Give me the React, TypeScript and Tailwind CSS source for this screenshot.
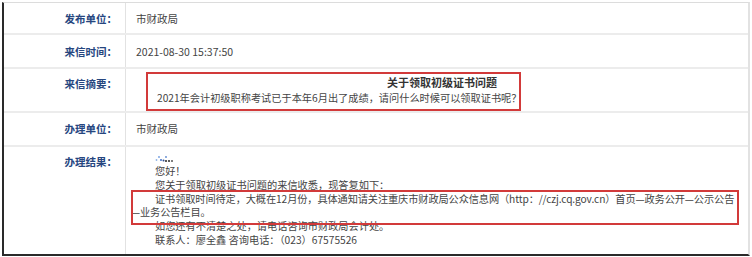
const font = { fontFamily: '"Noto Sans CJK SC", "Noto Sans", sans-serif' }

function Label({ children, pt }: { children: string; pt: string }) {
  return (
    <div
      className={`w-[122px] shrink-0 border-r border-[#e2e2e2] pr-[8px] text-right text-[10.5px] leading-[13px] font-bold text-[#26467f] ${pt}`}
    >
      {children}
    </div>
  )
}

function RedactedName() {
  return (
    <svg width="20" height="9" viewBox="0 0 20 9" className="block">
      <circle cx="1.5" cy="5" r="0.9" fill="#8fb4e6" />
      <circle cx="4" cy="2" r="0.9" fill="#6f9be0" />
      <circle cx="6" cy="5" r="1" fill="#3f6fc4" />
      <circle cx="8.5" cy="5.5" r="1" fill="#2f4f8f" />
      <circle cx="11" cy="2" r="0.9" fill="#5c86cf" />
      <circle cx="11" cy="6" r="1.1" fill="#333" />
      <circle cx="14" cy="6" r="1.1" fill="#333" />
      <circle cx="17" cy="6" r="1" fill="#555" />
    </svg>
  )
}

export default function App() {
  return (
    <div className="h-[257px] w-[752px] bg-white pl-[2px] pt-[2px]" style={font}>
      <div className="relative h-[254px] w-[748px] border-t border-r-2 border-b-2 border-l-2 border-t-[#dcdcdc] border-r-[#e2e2e2] border-b-[#2a2a2a] border-l-[#2a2a2a] text-[#444]">
        {/* 发布单位 */}
        <div className="flex h-[32px] border-b-2 border-[#ececec]">
          <Label pt="pt-[9px]">发布单位：</Label>
          <div className="flex-1 pl-[10px] pt-[9px] text-[10.5px] leading-[13px]">市财政局</div>
        </div>

        {/* 来信时间 */}
        <div className="flex h-[34px] border-b-2 border-[#ececec]">
          <Label pt="pt-[10px]">来信时间：</Label>
          <div className="flex-1 pl-[10px] pt-[10px] text-[10.5px] leading-[13px]">2021-08-30 15:37:50</div>
        </div>

        {/* 来信摘要 */}
        <div className="flex h-[44px] border-b-2 border-[#ececec]">
          <Label pt="pt-[8px]">来信摘要：</Label>
          <div className="flex-1 pl-[10px] pt-[6px] text-[10.2px] leading-[15px]">
            <p className="text-center text-[11px] font-bold text-[#333]">关于领取初级证书问题</p>
            <p className="indent-[21px]">
              2021年会计初级职称考试已于本年6月出了成绩，请问什么时候可以领取证书呢？
            </p>
          </div>
        </div>

        {/* 办理单位 */}
        <div className="flex h-[34px] border-b-2 border-[#ececec]">
          <Label pt="pt-[9px]">办理单位：</Label>
          <div className="flex-1 pl-[10px] pt-[9px] text-[10.5px] leading-[13px]">市财政局</div>
        </div>

        {/* 办理结果 */}
        <div className="flex h-[107px]">
          <Label pt="pt-[8px]">办理结果：</Label>
          <div className="flex-1 pl-[5px] pt-[8px] text-[10.2px] leading-[13.8px]">
            <div className="h-[9px] pl-[24px]">
              <RedactedName />
            </div>
            <p className="indent-[24px]">您好！</p>
            <p className="indent-[24px]">您关于领取初级证书问题的来信收悉，现答复如下：</p>
            <p className="indent-[24px] tracking-[-0.1px]">
              证书领取时间待定，大概在12月份，具体通知请关注重庆市财政局公众信息网（http：//czj.cq.gov.cn）首页—政务公开—公示公告
              <br />
              —业务公告栏目。
            </p>
            <p className="indent-[24px]">如您还有不清楚之处，请电话咨询市财政局会计处。</p>
            <p className="indent-[24px]">联系人：廖全鑫 咨询电话：（023）67575526</p>
          </div>
        </div>

        {/* annotation boxes */}
        <div className="absolute left-[142px] top-[69px] h-[39px] w-[375px] border-2 border-[#d23a3a]" />
        <div className="absolute left-[127px] top-[187px] h-[35px] w-[608px] border-2 border-[#d23a3a]" />
      </div>
    </div>
  )
}
